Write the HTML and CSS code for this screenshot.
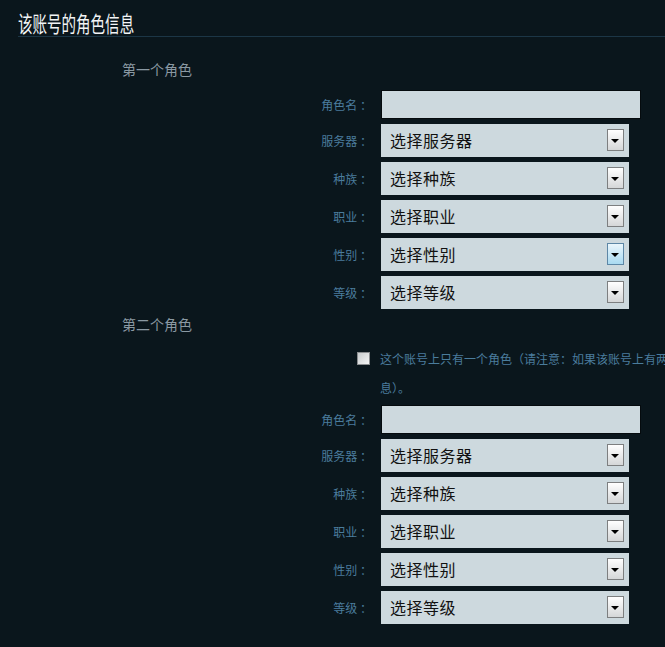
FILE: index.html
```html
<!DOCTYPE html>
<html lang="zh-CN">
<head>
<meta charset="utf-8">
<title>该账号的角色信息</title>
<link rel="stylesheet" href="styles.css">
</head>
<body>
<div class="page">
  <div class="title-bar"><h1 class="title">该账号的角色信息</h1></div>

  <h2 class="section">第一个角色</h2>
  <div class="form">
    <div class="row row-input"><label class="label">角色名 ：</label><input class="text" type="text"></div>
    <div class="row"><span class="label">服务器 ：</span><div class="select">选择服务器<span class="arrow"></span></div></div>
    <div class="row"><span class="label">种族 ：</span><div class="select">选择种族<span class="arrow"></span></div></div>
    <div class="row"><span class="label">职业 ：</span><div class="select">选择职业<span class="arrow"></span></div></div>
    <div class="row"><span class="label">性别 ：</span><div class="select">选择性别<span class="arrow hover"></span></div></div>
    <div class="row"><span class="label">等级 ：</span><div class="select">选择等级<span class="arrow"></span></div></div>
  </div>

  <h2 class="section section-2">第二个角色</h2>
  <div class="note-row">
    <span class="checkbox"></span>
    <p class="note">这个账号上只有一个角色（请注意：如果该账号上有两个角色，请务必填写第二个角色的信息）。</p>
  </div>
  <div class="form">
    <div class="row row-input"><label class="label">角色名 ：</label><input class="text" type="text"></div>
    <div class="row"><span class="label">服务器 ：</span><div class="select">选择服务器<span class="arrow"></span></div></div>
    <div class="row"><span class="label">种族 ：</span><div class="select">选择种族<span class="arrow"></span></div></div>
    <div class="row"><span class="label">职业 ：</span><div class="select">选择职业<span class="arrow"></span></div></div>
    <div class="row"><span class="label">性别 ：</span><div class="select">选择性别<span class="arrow"></span></div></div>
    <div class="row"><span class="label">等级 ：</span><div class="select">选择等级<span class="arrow"></span></div></div>
  </div>
</div>
</body>
</html>
```
FILE: styles.css
```css
html, body {
  margin: 0;
  padding: 0;
  background: #0a161c;
  overflow: hidden;
}
body {
  width: 665px;
  height: 647px;
  font-family: "Noto Sans CJK SC", "Noto Sans", sans-serif;
}
.page {
  padding-left: 18px;
}
.title-bar {
  padding-top: 10px;
  padding-bottom: 2px;
  border-bottom: 1px solid #1c3646;
}
.title {
  margin: 0;
  display: block;
  height: 24px;
  font-size: 22px;
  line-height: 24px;
  font-weight: normal;
  color: #f2f4f5;
  transform: scaleX(0.66);
  transform-origin: left center;
  white-space: nowrap;
}
.section {
  margin: 22px 0 0 104px;
  font-size: 14px;
  line-height: 20px;
  font-weight: normal;
  color: #8a99a3;
}
.section-2 {
  margin-top: 5px;
}
.form {
  margin-top: 11px;
  display: flex;
  flex-direction: column;
  gap: 5px;
}
.note-row + .form {
  margin-top: 3px;
}
.row {
  display: flex;
  align-items: center;
  height: 33px;
}
.row-input {
  height: 29px;
}
.label {
  width: 354px;
  text-align: right;
  margin-right: 9px;
  font-size: 12px;
  color: #4a7c9c;
  white-space: nowrap;
}
.text {
  box-sizing: border-box;
  width: 260px;
  height: 29px;
  margin: 0;
  border: 1px solid #050b0e;
  background: #cdd9de;
  padding: 0 8px;
  outline: none;
}
.select {
  box-sizing: border-box;
  position: relative;
  width: 248px;
  height: 33px;
  background: #cdd9de;
  padding-left: 9px;
  font-size: 16px;
  line-height: 33px;
  color: #111;
  letter-spacing: 0.5px;
}
.arrow {
  position: absolute;
  right: 5px;
  top: 5px;
  box-sizing: border-box;
  width: 17px;
  height: 22px;
  border: 1px solid #7d7f80;
  background: linear-gradient(#ffffff, #d5d7d8);
}
.arrow::after {
  content: "";
  position: absolute;
  left: 3px;
  top: 9px;
  border-left: 4px solid transparent;
  border-right: 4px solid transparent;
  border-top: 4px solid #000;
}
.arrow.hover {
  border-color: #5d87a6;
  background: linear-gradient(#eaf6fc, #a9daf1);
}
.note-row {
  display: flex;
  align-items: flex-start;
  margin-top: 10px;
  margin-left: 339px;
}
.checkbox {
  box-sizing: border-box;
  width: 13px;
  height: 13px;
  margin-top: 8px;
  margin-right: 10px;
  border: 1px solid #8a8d8f;
  background: linear-gradient(135deg, #c9cccd, #f4f5f5);
  flex: none;
}
.note {
  margin: 0;
  width: 482px;
  flex: none;
  font-size: 12px;
  line-height: 29px;
  color: #4a7c9c;
}
```
